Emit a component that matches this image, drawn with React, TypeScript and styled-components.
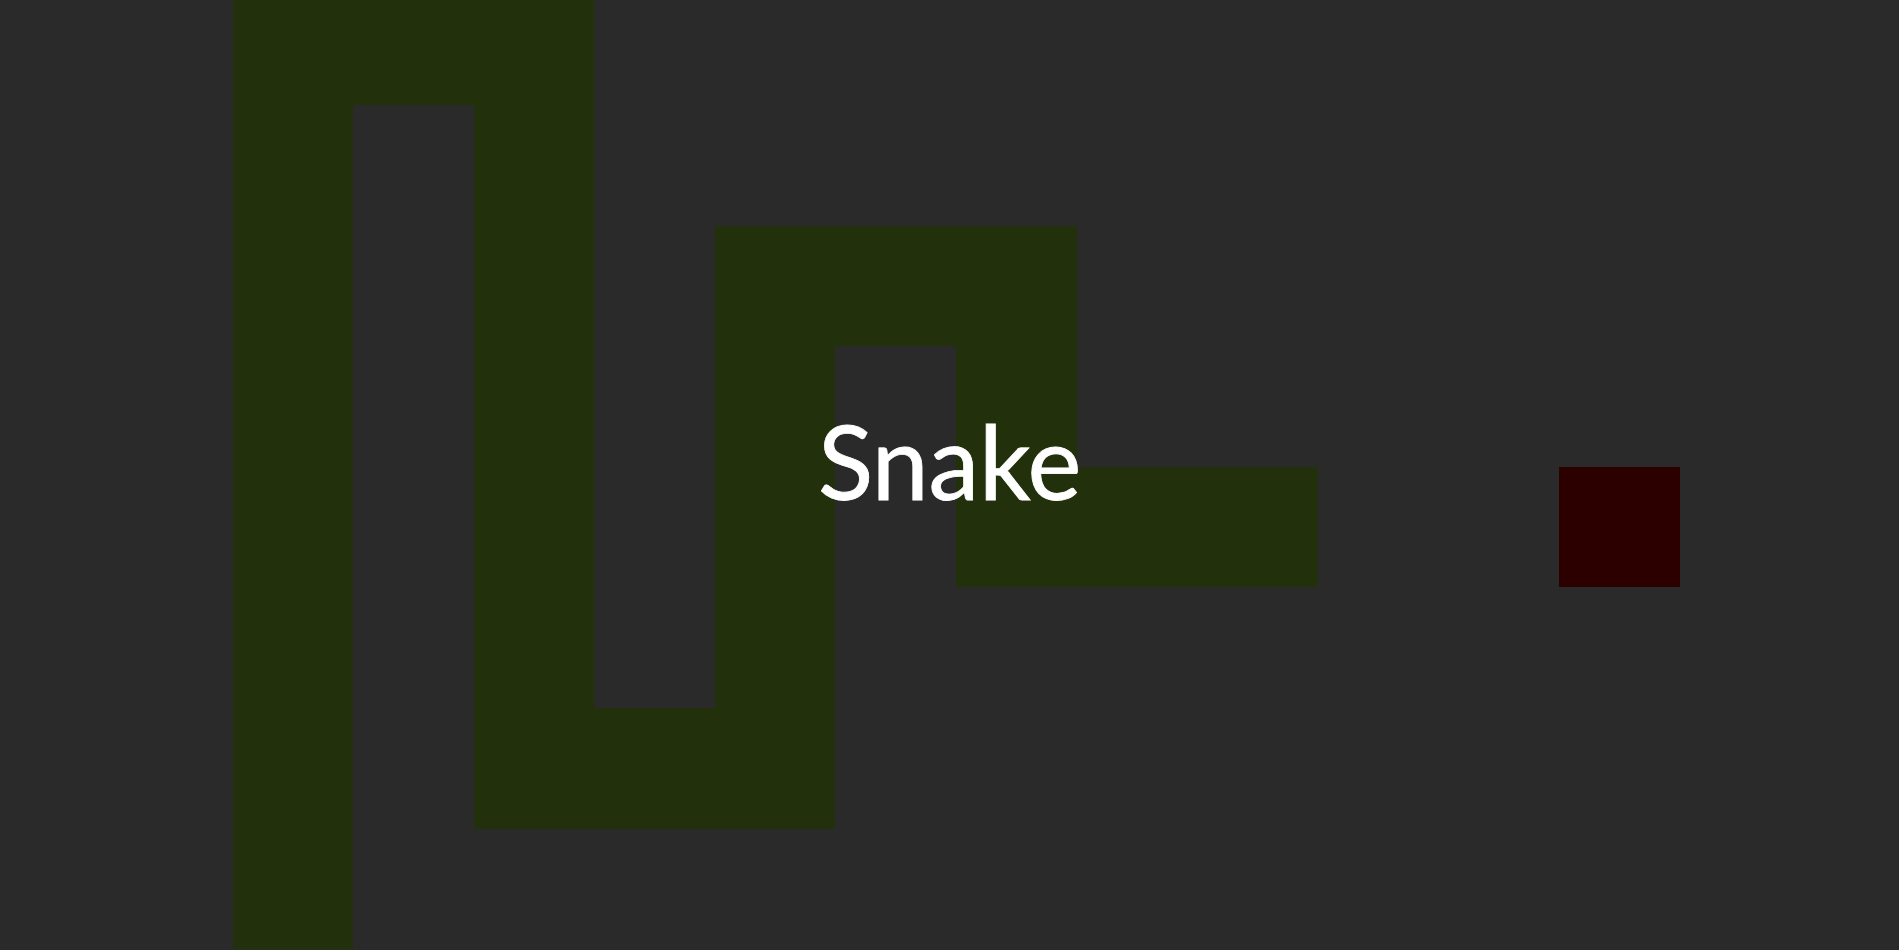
import React from "react";
import styled, { createGlobalStyle } from "styled-components";

const CELL = 120.6;

const Global = createGlobalStyle`
  html, body, #root { margin: 0; padding: 0; width: 100%; height: 100%; }
  body { background: #2a2a2a; overflow: hidden; font-family: Lato, "Open Sans", sans-serif; }
`;

const Screen = styled.main`
  position: relative;
  width: 100vw;
  height: 100vh;
  overflow: hidden;
  background: #2a2a2a;
`;

const Board = styled.div`
  display: grid;
  grid-template-columns: repeat(16, ${CELL}px);
  grid-template-rows: repeat(8, ${CELL}px);
  margin-left: -8.7px;
  margin-top: -15.5px;
  filter: blur(0.6px);
`;

const Segment = styled.div<{ $col: string; $row: string }>`
  grid-column: ${(p) => p.$col};
  grid-row: ${(p) => p.$row};
  background: #22300b;
`;

const Food = styled.div<{ $col: string; $row: string }>`
  grid-column: ${(p) => p.$col};
  grid-row: ${(p) => p.$row};
  background: #2d0000;
`;

const Overlay = styled.div`
  position: absolute;
  inset: 0;
  display: flex;
  align-items: center;
  justify-content: center;
`;

const Title = styled.h1`
  margin: 0 0 28px 0;
  font-family: Lato, "Open Sans", sans-serif;
  font-weight: 400;
  font-size: 102px;
  line-height: 1.2;
  color: #ffffff;
  letter-spacing: -0.3px;
  -webkit-text-stroke: 0.8px #ffffff;
`;

const segments: { col: string; row: string }[] = [
  { col: "3", row: "1 / 9" },
  { col: "3 / 6", row: "1" },
  { col: "5", row: "1 / 8" },
  { col: "5 / 8", row: "7" },
  { col: "7", row: "3 / 8" },
  { col: "7 / 10", row: "3" },
  { col: "9", row: "3 / 6" },
  { col: "9 / 12", row: "5" },
];

export default function App() {
  return (
    <Screen>
      <Global />
      <Board>
        {segments.map((s, i) => (
          <Segment key={i} $col={s.col} $row={s.row} />
        ))}
        <Food $col="14" $row="5" />
      </Board>
      <Overlay>
        <Title>Snake</Title>
      </Overlay>
    </Screen>
  );
}
